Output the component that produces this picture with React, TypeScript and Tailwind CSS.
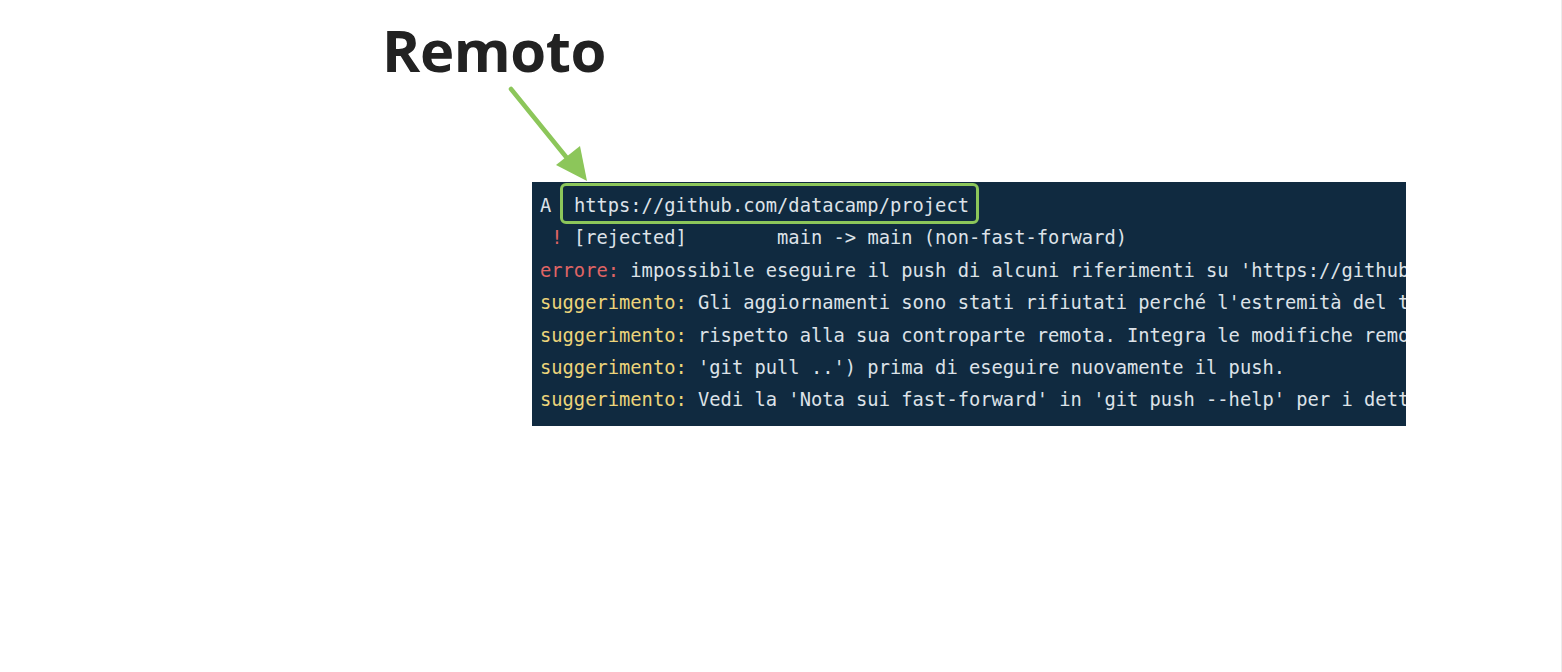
const mono = { fontFamily: '"DejaVu Sans Mono", "Liberation Mono", monospace' };

function Hint({ children }: { children: React.ReactNode }) {
  return (
    <div>
      <span className="text-[#ecd47a]">suggerimento:</span> {children}
    </div>
  );
}

export default function App() {
  return (
    <div className="relative w-[1562px] h-[672px] bg-white overflow-hidden border-r border-[#ececec]">
      <h1
        className="ml-[382px] pt-[14px] text-[58px] font-bold leading-[72px] text-[#222] tracking-[-0.4px]"
        style={{ fontFamily: '"Open Sans", "Noto Sans", sans-serif' }}
      >
        Remoto
      </h1>

      <svg className="absolute left-0 top-0 pointer-events-none" width="1562" height="672">
        <line x1="511" y1="89" x2="571" y2="163" stroke="#8cc65a" strokeWidth="4.5" strokeLinecap="round" />
        <polygon points="587,181 556,165 580,146" fill="#8cc65a" />
      </svg>

      <div
        className="ml-[532px] mt-[96px] w-[874px] h-[244px] bg-[#102a40] overflow-hidden whitespace-pre pl-[8px] pt-[8px] text-[18.75px] leading-[32.4px] text-[#dde2e8]"
        style={mono}
      >
        <div>
          A{"  "}
          <span className="relative">
            <span className="absolute -top-[12px] -bottom-[8px] -left-[14px] -right-[10px] border-[3px] border-[#8cc65a] rounded-[6px]" />
            https://github.com/datacamp/project
          </span>
        </div>
        <div>
          {" "}
          <span className="text-[#e06565]">!</span> [rejected]        main -&gt; main (non-fast-forward)
        </div>
        <div>
          <span className="text-[#e06565]">errore:</span> impossibile eseguire il push di alcuni riferimenti su 'https://github.com/datacamp/project'
        </div>
        <Hint>Gli aggiornamenti sono stati rifiutati perché l'estremità del tuo branch corrente è rimasta indietro</Hint>
        <Hint>rispetto alla sua controparte remota. Integra le modifiche remote (ad es.</Hint>
        <Hint>'git pull ..') prima di eseguire nuovamente il push.</Hint>
        <Hint>Vedi la 'Nota sui fast-forward' in 'git push --help' per i dettagli.</Hint>
      </div>
    </div>
  );
}
